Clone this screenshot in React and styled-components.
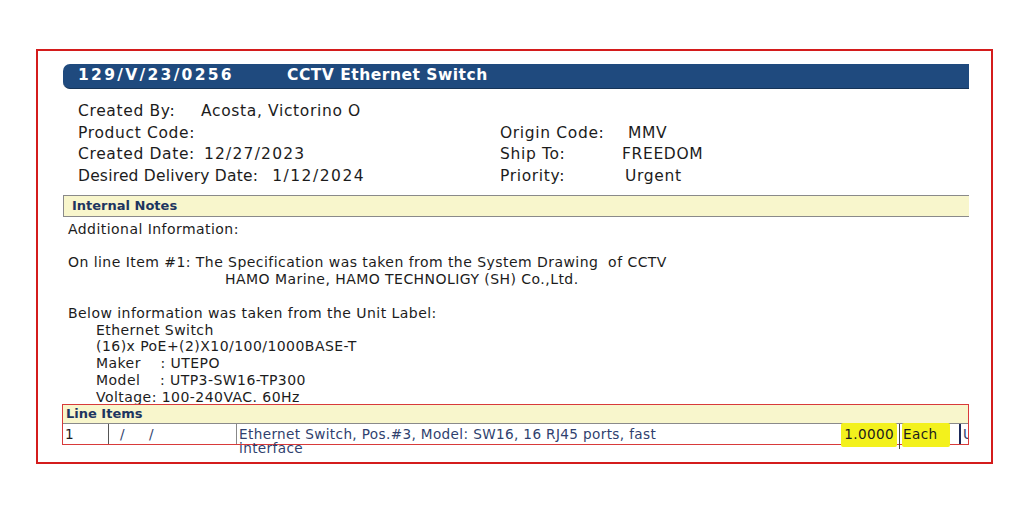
import React from "react";
import styled, { createGlobalStyle } from "styled-components";

const Global = createGlobalStyle`
  html, body { margin: 0; padding: 0; background: #ffffff; }
  body { font-family: "DejaVu Sans", Verdana, sans-serif; color: #1c1c1c; }
`;

const Page = styled.div`
  width: 1024px;
  height: 506px;
  padding: 49px 0 0 36px;
  box-sizing: border-box;
`;

const Frame = styled.div`
  width: 957px;
  height: 415px;
  border: 2px solid #d41c1c;
  box-sizing: border-box;
  padding: 13px 0 0 25px;
`;

const Content = styled.div`
  width: 906px;
`;

const TitleBar = styled.div`
  height: 25px;
  box-sizing: border-box;
  background: #1f4a7e;
  border-bottom: 1px solid #163457;
  border-radius: 7px 0 0 7px;
  display: flex;
  align-items: flex-start;
  padding: 2px 0 0 15px;
  line-height: 18px;
  color: #ffffff;
  font-weight: bold;
  font-size: 15.5px;
`;

const TitleText = styled.span`
  width: ${(p) => p.$w || "auto"};
  letter-spacing: ${(p) => p.$ls || 0}px;
`;

const Details = styled.div`
  display: grid;
  grid-template-columns: 422px 1fr;
  grid-auto-rows: 21.7px;
  margin-top: 11px;
  padding-left: 15px;
  font-size: 15.5px;
  letter-spacing: 0.65px;
  align-items: center;
`;

const Field = styled.div`
  display: flex;
  white-space: nowrap;
`;

const Label = styled.span`
  width: ${(p) => p.$w || "auto"};
  letter-spacing: ${(p) => p.$ls ?? 0.65}px;
  flex-shrink: 0;
`;

const Value = styled.span`
  margin-left: ${(p) => p.$ml || 0}px;
  letter-spacing: ${(p) => p.$ls ?? 0.65}px;
`;

const SectionBar = styled.div`
  height: 20px;
  background: #f8f6cc;
  border-top: 1px solid #8a8a8a;
  border-bottom: 1px solid #8a8a8a;
  border-left: 1px solid #8a8a8a;
  display: flex;
  align-items: center;
  padding-left: 8px;
  font-weight: bold;
  font-size: 13px;
  color: #1d3560;
`;

const NotesBar = styled(SectionBar)`
  margin-top: 8px;
`;

const Notes = styled.div`
  height: 187px;
  overflow: hidden;
  padding: 4px 0 0 5px;
  box-sizing: border-box;
  font-size: 14px;
  letter-spacing: 0.45px;
  line-height: 16.8px;
`;

const Line = styled.div`
  padding-left: ${(p) => p.$indent || 0}px;
  min-height: 16.8px;
  white-space: pre;
`;

const LineItems = styled.div`
  margin-left: -1px;
  width: 907px;
  height: 41px;
  border: 1px solid #d83a3a;
  box-sizing: border-box;
`;

const ItemsBar = styled.div`
  height: 18px;
  background: #f8f6cc;
  border-bottom: 1px solid #8a8a8a;
  display: flex;
  align-items: center;
  padding-left: 3px;
  font-weight: bold;
  font-size: 13px;
  color: #1d3560;
`;

const ItemRow = styled.div`
  display: grid;
  grid-template-columns: 45px 128px 440px 223px 60px 1fr;
  height: 20px;
  font-size: 13.6px;
  letter-spacing: 0.37px;
  line-height: 14px;
  color: #2f3f6e;
`;

const Cell = styled.div`
  padding: ${(p) => (p.$right ? "3px 2px 0 0" : "3px 0 0 2px")};
  text-align: ${(p) => (p.$right ? "right" : "left")};
  border-left: ${(p) => p.$line || "none"};
  height: ${(p) => p.$tall || 20}px;
  white-space: ${(p) => (p.$wrap ? "normal" : "nowrap")};
  color: ${(p) => p.$color || "inherit"};
  overflow: ${(p) => (p.$clip ? "hidden" : "visible")};
  box-sizing: border-box;
`;

const Slash = styled.span`
  margin-left: ${(p) => p.$ml}px;
`;

const Marker = styled.span`
  background: #f3f11c;
  padding: 3px ${(p) => p.$pr || 1}px 5px ${(p) => p.$pl || 1}px;
  border-radius: 2px;
`;

export default function App() {
  return (
    <Page>
      <Global />
      <Frame>
        <Content>
          <TitleBar>
            <TitleText $w="209px" $ls={2.3}>129/V/23/0256</TitleText>
            <TitleText $ls={0.5}>CCTV Ethernet Switch</TitleText>
          </TitleBar>
          <Details>
            <Field>
              <Label $w="123px">Created By:</Label>
              <Value>Acosta, Victorino O</Value>
            </Field>
            <Field />
            <Field>
              <Label>Product Code:</Label>
            </Field>
            <Field>
              <Label $w="122px">Origin Code:</Label>
              <Value $ml={6}>MMV</Value>
            </Field>
            <Field>
              <Label>Created Date:</Label>
              <Value $ml={9} $ls={1.2}>12/27/2023</Value>
            </Field>
            <Field>
              <Label $w="122px">Ship To:</Label>
              <Value>FREEDOM</Value>
            </Field>
            <Field>
              <Label $ls={0.2}>Desired Delivery Date:</Label>
              <Value $ml={14} $ls={1.5}>1/12/2024</Value>
            </Field>
            <Field>
              <Label $w="122px">Priority:</Label>
              <Value $ml={3}>Urgent</Value>
            </Field>
          </Details>
          <NotesBar>Internal Notes</NotesBar>
          <Notes>
            <Line>Additional Information:</Line>
            <Line />
            <Line>On line Item #1: The Specification was taken from the System Drawing  of CCTV</Line>
            <Line $indent={157}>HAMO Marine, HAMO TECHNOLIGY (SH) Co.,Ltd.</Line>
            <Line />
            <Line>Below information was taken from the Unit Label:</Line>
            <Line $indent={28}>Ethernet Switch</Line>
            <Line $indent={28}>(16)x PoE+(2)X10/100/1000BASE-T</Line>
            <Line $indent={28}>Maker    : UTEPO</Line>
            <Line $indent={28}>Model    : UTP3-SW16-TP300</Line>
            <Line $indent={28}>Voltage: 100-240VAC. 60Hz</Line>
          </Notes>
          <LineItems>
            <ItemsBar>Line Items</ItemsBar>
            <ItemRow>
              <Cell $color="#1c1c1c">1</Cell>
              <Cell $line="1px solid #555">
                <Slash $ml={9}>/</Slash>
                <Slash $ml={24}>/</Slash>
              </Cell>
              <Cell $line="1px solid #888" $wrap>
                Ethernet Switch, Pos.#3, Model: SW16, 16 RJ45 ports, fast interface
              </Cell>
              <Cell $right $color="#1c1c1c">
                <Marker $pr={3} $pl={3}>1.0000</Marker>
              </Cell>
              <Cell $line="1px solid #444" $tall={25} $color="#1c1c1c">
                <Marker $pr={12}>Each</Marker>
              </Cell>
              <Cell $line="2px solid #1d2a5a" $clip>U</Cell>
            </ItemRow>
          </LineItems>
        </Content>
      </Frame>
    </Page>
  );
}
